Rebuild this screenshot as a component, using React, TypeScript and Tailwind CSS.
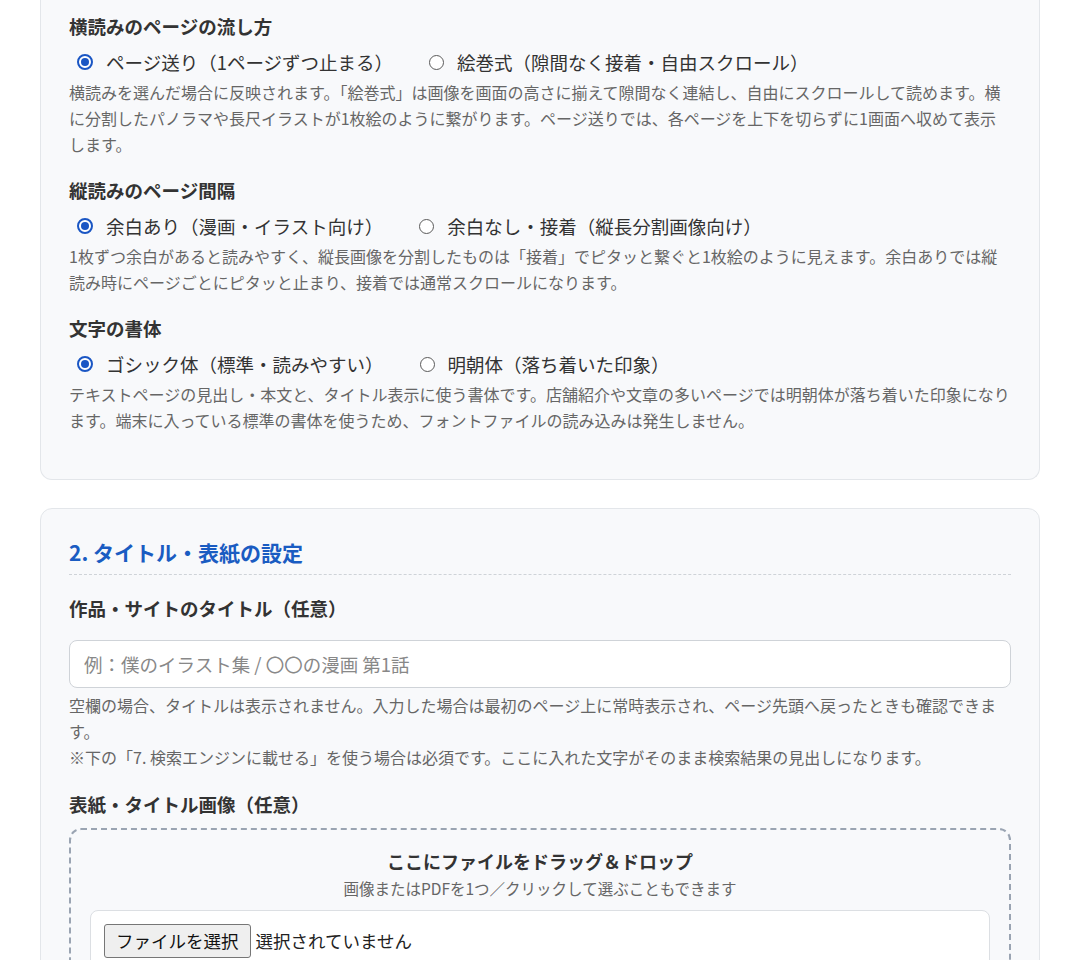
import React from 'react';

const FONT = 'font-["Noto_Sans_CJK_JP",_"Noto_Sans",_sans-serif]';

interface Option {
  label: string;
  checked?: boolean;
}

interface RadioGroupProps {
  title: string;
  options: Option[];
  note: string;
}

const Radio: React.FC<Option> = ({ label, checked }) => (
  <label className="flex items-center gap-[13px] cursor-pointer">
    {checked ? (
      <span className="flex h-4 w-4 items-center justify-center rounded-full border-2 border-[#1a56c4] bg-white">
        <span className="h-[8px] w-[8px] rounded-full bg-[#1a56c4]" />
      </span>
    ) : (
      <span className="h-[15px] w-[15px] rounded-full border-[1.5px] border-[#5a5a5a] bg-white" />
    )}
    <span>{label}</span>
  </label>
);

const RadioGroup: React.FC<RadioGroupProps> = ({ title, options, note }) => (
  <div className="mb-5">
    <h3 className="text-[18.5px] font-bold leading-[27px] text-[#333]">{title}</h3>
    <div className="mt-[7px] flex items-center gap-[36px] pl-[8px] text-[18.5px] leading-[30px] text-[#333]">
      {options.map((o) => (
        <Radio key={o.label} {...o} />
      ))}
    </div>
    <p className="mt-[2px] text-[16px] leading-[26px] text-[#666]">{note}</p>
  </div>
);

export default function App() {
  return (
    <div className={`min-h-screen bg-white ${FONT}`}>
      <div className="mx-auto w-[1000px] pb-10">
        {/* 表示設定カード（上部はスクロール済み） */}
        <section className="rounded-b-xl border border-t-0 border-[#e3e6ea] bg-[#f8f9fb] px-7 pt-[13px] pb-[26px]">
          <RadioGroup
            title="横読みのページの流し方"
            options={[
              { label: 'ページ送り（1ページずつ止まる）', checked: true },
              { label: '絵巻式（隙間なく接着・自由スクロール）' },
            ]}
            note="横読みを選んだ場合に反映されます。「絵巻式」は画像を画面の高さに揃えて隙間なく連結し、自由にスクロールして読めます。横に分割したパノラマや長尺イラストが1枚絵のように繋がります。ページ送りでは、各ページを上下を切らずに1画面へ収めて表示します。"
          />
          <RadioGroup
            title="縦読みのページ間隔"
            options={[
              { label: '余白あり（漫画・イラスト向け）', checked: true },
              { label: '余白なし・接着（縦長分割画像向け）' },
            ]}
            note="1枚ずつ余白があると読みやすく、縦長画像を分割したものは「接着」でピタッと繋ぐと1枚絵のように見えます。余白ありでは縦読み時にページごとにピタッと止まり、接着では通常スクロールになります。"
          />
          <RadioGroup
            title="文字の書体"
            options={[
              { label: 'ゴシック体（標準・読みやすい）', checked: true },
              { label: '明朝体（落ち着いた印象）' },
            ]}
            note="テキストページの見出し・本文と、タイトル表示に使う書体です。店舗紹介や文章の多いページでは明朝体が落ち着いた印象になります。端末に入っている標準の書体を使うため、フォントファイルの読み込みは発生しません。"
          />
        </section>

        {/* 2. タイトル・表紙 */}
        <section className="mt-7 rounded-xl border border-[#e3e6ea] bg-[#f8f9fb] px-7 pt-7 pb-8">
          <h2 className="border-b border-dashed border-[#cfd3d8] pb-[7px] text-[21px] font-bold leading-[30px] text-[#1a5cc2]">
            2. タイトル・表紙の設定
          </h2>

          <h3 className="mt-5 text-[18.5px] font-bold leading-[27px] text-[#333]">作品・サイトのタイトル（任意）</h3>
          <input
            type="text"
            placeholder="例：僕のイラスト集 / 〇〇の漫画 第1話"
            className="mt-[18px] block h-12 w-full rounded-lg border border-[#cfd3d8] bg-white px-[14px] text-[18.5px] text-[#333] outline-none placeholder:text-[#888]"
          />
          <p className="mt-1 text-[16px] leading-[26px] text-[#666]">
            空欄の場合、タイトルは表示されません。入力した場合は最初のページ上に常時表示され、ページ先頭へ戻ったときも確認できます。
            <br />
            ※下の「7. 検索エンジンに載せる」を使う場合は必須です。ここに入れた文字がそのまま検索結果の見出しになります。
          </p>

          <h3 className="mt-[21px] text-[18.5px] font-bold leading-[27px] text-[#333]">表紙・タイトル画像（任意）</h3>
          <div className="mt-[10px] rounded-xl border-2 border-dashed border-[#9aa4b2] px-[19px] pt-5 pb-5 text-center">
            <p className="text-[18px] font-bold leading-[22px] text-[#333]">ここにファイルをドラッグ＆ドロップ</p>
            <p className="mt-[6px] text-[15.5px] leading-[20px] text-[#666]">
              画像またはPDFを1つ／クリックして選ぶこともできます
            </p>
            <div className="mt-3 flex items-center gap-[5px] rounded-lg border border-[#dcdfe3] bg-white p-[13px] text-left">
              <button className="h-[34px] rounded-[3px] border border-[#767676] bg-[#efefef] px-[11px] text-[17.5px] text-[#111]">
                ファイルを選択
              </button>
              <span className="text-[17.5px] text-[#222]">選択されていません</span>
            </div>
          </div>
        </section>
      </div>
    </div>
  );
}
